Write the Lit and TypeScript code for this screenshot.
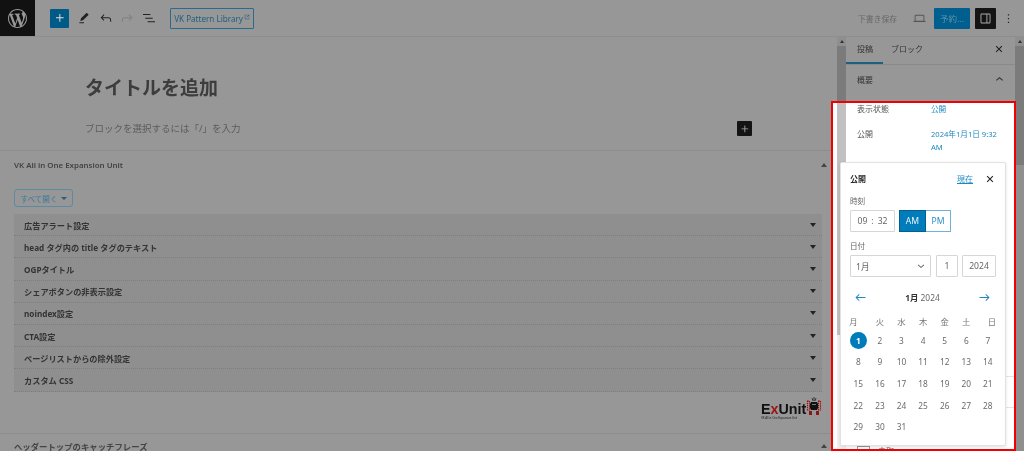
import { LitElement, html, css, svg } from "lit";
import { customElement } from "lit/decorators.js";

const icon = (d: string, size = 16, cls = "") =>
  html`<svg class=${cls} width=${size} height=${size} viewBox="0 0 24 24" fill="currentColor"><path d=${d}></path></svg>`;

const P = {
  plus: "M11 12.5V17.5H12.5V12.5H17.5V11H12.5V6H11V11H6V12.5H11Z",
  brush: "m19 7-3-3-8.5 8.5-1 4 4-1L19 7Zm-7 11.5H5V20h7v-1.5Z",
  undo: "M18.3 11.7c-.6-.6-1.4-.9-2.3-.9H6.7l2.9-3.3-1.1-1-4.5 5L8.5 16l1-1-2.7-2.7H16c.5 0 .9.2 1.3.5 1 1 1 3.4 1 4.5v.3h1.5v-.2c0-1.5 0-4.3-1.5-5.7z",
  redo: "M15.6 6.5l-1.1 1 2.9 3.3H8c-.9 0-1.7.3-2.3.9-1.4 1.5-1.4 4.2-1.4 5.6v.2h1.5v-.3c0-1.1 0-3.5 1-4.5.3-.3.7-.5 1.3-.5h9.2L14.5 15l1.1 1.1 4.6-4.6-4.6-5z",
  list: "M3 6h11v1.5H3V6zm3.5 5.5h11V13h-11v-1.5zM21 17H10v1.5h11V17z",
  closeBold: "M13.8 12l6-6-1.8-1.8-6 6-6-6L4.2 6l6 6-6 6L6 19.8l6-6 6 6 1.8-1.8z",
  up: "M5.5 13L12 7.5l6.5 5.5-1.2 1.4L12 10l-5.3 4.4L5.5 13z",
  down: "M18.5 10.5L12 16l-6.5-5.5 1.2-1.4L12 13.5l5.3-4.4 1.2 1.4z",
  left: "M20 11.2H6.8l3.7-3.7-1-1L3.9 12l5.6 5.5 1-1-3.7-3.7H20z",
  right: "m14.5 6.5-1 1 3.7 3.7H4v1.6h13.2l-3.7 3.7 1 1 5.6-5.5z",
  laptop: "M20.5 16h-.7V8c0-1.1-.9-2-2-2H6.2c-1.1 0-2 .9-2 2v8h-.7c-.8 0-1.5.7-1.5 1.5h20c0-.8-.7-1.5-1.5-1.5zM5.7 8c0-.3.2-.5.5-.5h11.6c.3 0 .5.2.5.5v7.6H5.7V8z",
  side: "M18 4H6c-1.1 0-2 .9-2 2v12c0 1.1.9 2 2 2h12c1.1 0 2-.9 2-2V6c0-1.1-.9-2-2-2zM5.5 18V6c0-.3.2-.5.5-.5h7.5v13H6c-.3 0-.5-.2-.5-.5zm13 0c0 .3-.2.5-.5.5h-3v-13h3c.3 0 .5.2.5.5v12z",
  dots: "M13 19h-2v-2h2v2zm0-6h-2v-2h2v2zm0-6h-2V5h2v2z",
  ext: "M19 14v5H5V5h5V3H3v18h18v-7zM13 3v2h4.6l-7.3 7.3 1.4 1.4L19 6.4V11h2V3z",
  wp: "M20 10c0-5.51-4.49-10-10-10C4.48 0 0 4.49 0 10c0 5.52 4.48 10 10 10 5.51 0 10-4.48 10-10zM7.78 15.37L4.37 6.22c.55-.02 1.17-.08 1.17-.08.5-.06.44-1.13-.06-1.11 0 0-1.45.11-2.37.11-.18 0-.37 0-.58-.01C4.12 2.69 6.87 1.11 10 1.11c2.33 0 4.45.87 6.05 2.34-.68-.11-1.65.39-1.65 1.58 0 .74.45 1.36.9 2.1.35.61.55 1.36.55 2.46 0 1.49-1.4 5-1.4 5l-3.03-8.37c.54-.02.82-.17.82-.17.5-.05.44-1.25-.06-1.22 0 0-1.44.12-2.38.12-.87 0-2.33-.12-2.33-.12-.5-.03-.56 1.2-.06 1.22l.92.08 1.26 3.41zM17.41 10c.24-.64.74-1.87.43-4.25.7 1.29 1.05 2.71 1.05 4.25 0 3.29-1.73 6.24-4.4 7.78.97-2.59 1.94-5.2 2.92-7.78zM6.1 18.09C3.12 16.65 1.11 13.53 1.11 10c0-1.3.23-2.48.72-3.59C3.25 10.3 4.67 14.2 6.1 18.09zm4.03-6.63l2.58 6.98c-.86.29-1.76.45-2.71.45-.79 0-1.57-.11-2.29-.33.81-2.38 1.62-4.74 2.42-7.1z",
};

const ROWS = [
  "広告アラート設定",
  "head タグ内の title タグのテキスト",
  "OGPタイトル",
  "シェアボタンの非表示設定",
  "noindex設定",
  "CTA設定",
  "ページリストからの除外設定",
  "カスタム CSS",
];
const WEEK = ["月", "火", "水", "木", "金", "土", "日"];
const DAYS = Array.from({ length: 31 }, (_, i) => i + 1);

@customElement("app-root")
export class AppRoot extends LitElement {
  static styles = css`
    :host {
      display: block;
      position: relative;
      width: 1024px;
      height: 451px;
      overflow: hidden;
      background: #979797;
      color: #2e2e2e;
      font-family: "Noto Sans", "Noto Sans CJK JP", sans-serif;
      font-size: 9px;
      filter: blur(0.35px);
    }
    svg { display: block; flex: none; }
    .top {
      height: 36px;
      display: flex;
      align-items: center;
      border-bottom: 1px solid #8e8e8e;
    }
    .wp {
      width: 35px;
      height: 36px;
      background: #111;
      color: #979797;
      display: flex;
      align-items: center;
      justify-content: center;
    }
    .add {
      width: 19px;
      height: 19px;
      margin-left: 15px;
      background: #005a87;
      color: #ddd;
      border-radius: 1px;
      display: flex;
      align-items: center;
      justify-content: center;
    }
    .tools { display: flex; gap: 5.7px; margin-left: 7px; color: #222; }
    .tools .off { color: #808080; }
    .vk {
      width: 84px;
      height: 21px;
      box-sizing: border-box;
      margin-left: 13px;
      border: 1px solid #2a6a8c;
      border-radius: 1px;
      color: #1f5f80;
      font-size: 8.1px;
      display: flex;
      align-items: center;
      justify-content: center;
      gap: 1px;
    }
    .vk svg { margin-top: -2px; }
    .sp { flex: 1; }
    .draft { color: #666; font-size: 7.8px; }
    .lap { margin-left: 15px; color: #555; }
    .pub {
      width: 36px;
      height: 21px;
      margin-left: 7px;
      background: #005f8e;
      color: #5d93ad;
      font-size: 8.5px;
      border-radius: 1px;
      display: flex;
      align-items: center;
      justify-content: center;
    }
    .toggle {
      width: 21px;
      height: 21px;
      margin-left: 5px;
      background: #141414;
      color: #aaa;
      border-radius: 1px;
      display: flex;
      align-items: center;
      justify-content: center;
    }
    .more { margin: 0 8px 0 5px; color: #222; }

    .body { display: flex; height: 414px; }
    .main { width: 837px; flex: none; box-sizing: border-box; }
    .editor {
      height: 114px;
      box-sizing: border-box;
      padding: 38px 85px 0;
      border-bottom: 1px solid #8d8d8d;
    }
    .title { font-size: 19px; line-height: 26px; font-weight: 700; color: #3d3d3d; }
    .ph {
      display: flex;
      align-items: center;
      justify-content: space-between;
      margin: 20px 0 0;
      font-size: 9.5px;
      line-height: 16px;
      color: #5c5c5c;
    }
    .ph .plus {
      width: 15px;
      height: 15px;
      margin-top: -1px;
      background: #141414;
      color: #aaa;
      border-radius: 1px;
      display: flex;
      align-items: center;
      justify-content: center;
    }
    .head {
      display: flex;
      align-items: center;
      justify-content: space-between;
      height: 26px;
      box-sizing: border-box;
      padding: 2px 10px 0 14px;
      font-weight: 600;
      font-size: 7.9px;
      color: #444;
    }
    .head.cjk { font-size: 8.4px; padding-top: 0; margin-top: -1px; }
    .tri {
      width: 0;
      height: 0;
      border-left: 3.5px solid transparent;
      border-right: 3.5px solid transparent;
      border-bottom: 4px solid #444;
    }
    .meta { padding: 12px 15px 0 14px; }
    .open {
      width: 59px;
      height: 18px;
      box-sizing: border-box;
      border: 1px solid #5d8aa3;
      border-radius: 3px;
      color: #3a7a9c;
      font-size: 7.6px;
      display: flex;
      align-items: center;
      justify-content: center;
      gap: 3px;
    }
    .open b {
      border-left: 3px solid transparent;
      border-right: 3px solid transparent;
      border-top: 3.5px solid #1f5f80;
    }
    .items { margin-top: 7px; background: #8f8f8f; }
    .item {
      height: 22.2px;
      box-sizing: border-box;
      padding: 0 6px 0 10px;
      display: flex;
      align-items: center;
      justify-content: space-between;
      font-weight: 700;
      font-size: 8.2px;
      color: #333;
      border-bottom: 1px dotted #7f7f7f;
    }
    .item b {
      border-left: 3.5px solid transparent;
      border-right: 3.5px solid transparent;
      border-top: 4px solid #222;
    }
    .brand {
      height: 41px;
      box-sizing: border-box;
      padding-top: 5px;
      display: flex;
      justify-content: flex-end;
      gap: 3px;
    }
    .ex { width: 42px; color: #111; font: 900 14.3px/16px "Liberation Sans", sans-serif; margin-top: 4px; }
    .ex em { color: #9c1111; font-style: normal; }
    .ex small { display: block; font-size: 2.8px; line-height: 3px; color: #222; white-space: nowrap; font-weight: 400; }
    .sec { border-top: 1px solid #8d8d8d; }
    .sb { width: 9px; flex: none; background: #8f8f8f; display: flex; flex-direction: column; }
    .sb .arr { height: 9px; display: flex; align-items: center; justify-content: center; }
    .sb .arr .tri { border-bottom-color: #333; border-left-width: 2.5px; border-right-width: 2.5px; border-bottom-width: 3px; }
    .sb .th { background: #7b7b7b; }
    .side { flex: 1; }
    .tabs {
      height: 27px;
      display: flex;
      border-bottom: 1px solid #8a8a8a;
      align-items: stretch;
      font-size: 8px;
      color: #333;
    }
    .tab { padding: 0 0 2px 8px; display: flex; align-items: center; border-bottom: 2px solid transparent; height: 27px; box-sizing: border-box; }
    .tab.on { border-bottom-color: #1f5f80; padding: 0 10px 2px 11px; }
    .tabs .x { margin: 7px 11px 0 auto; color: #222; }
    .sum {
      height: 28px;
      display: flex;
      align-items: center;
      justify-content: space-between;
      padding: 0 9px 0 11px;
      color: #333;
      font-size: 8px;
    }

    .hl {
      position: absolute;
      left: 831px;
      top: 101px;
      width: 185px;
      height: 350px;
      box-sizing: border-box;
      border: 2px solid #f00000;
      background: #fff;
      display: flex;
      overflow: hidden;
    }
    .hl .gut { width: 4px; flex: none; }
    .hl .track { width: 9px; flex: none; background: #f1f1f1; }
    .hl .thumb { height: 232px; background: #c1c1c1; }
    .hl .panel { flex: 1; padding: 0 0 0 11px; color: #555; font-size: 8px; }
    .row { display: flex; }
    .row span:first-child { width: 74px; flex: none; }
    .row a { color: #1e88c0; font-size: 7.6px; }
    .r1 { line-height: 12.5px; margin-top: -0.5px; }
    .r2 { line-height: 12.5px; margin-top: 13px; }
    .ln { height: 1px; background: #e4e4e4; margin-left: -11px; }
    .ln1 { margin-top: 223px; }
    .ln2 { margin-top: 30px; }
    .chk { display: flex; gap: 8px; align-items: flex-start; margin-top: 38px; font-size: 8px; line-height: 10px; }
    .chk i { width: 13px; height: 10px; border: 1px solid #999; box-sizing: border-box; }

    .pop {
      position: absolute;
      left: 7px;
      top: 59px;
      width: 166px;
      height: 284px;
      box-sizing: border-box;
      padding: 8px 10px 0 9px;
      background: #fff;
      border: 1px solid #e2e2e2;
      border-radius: 2px;
      box-shadow: 0 1px 3px rgba(0, 0, 0, 0.12);
      color: #555;
      font-size: 8.5px;
    }
    .ph2 { display: flex; align-items: center; height: 15px; }
    .ph2 strong { font-weight: 700; color: #2a2a2a; font-size: 8px; }
    .ph2 a { margin-left: auto; color: #1e88c0; text-decoration: underline; font-size: 8px; }
    .ph2 svg { margin-left: 12px; color: #222; }
    .lab { font-size: 7.6px; color: #666; line-height: 10px; }
    .lab.t { margin-top: 10px; }
    .lab.d { margin-top: 9px; }
    .timer { display: flex; margin-top: 4px; }
    .field {
      height: 22px;
      box-sizing: border-box;
      border: 1px solid #d6d6d6;
      border-radius: 1px;
      display: flex;
      align-items: center;
      justify-content: center;
      font-size: 8.6px;
      color: #666;
    }
    .time { width: 45px; gap: 4px; }
    .ampm { display: flex; margin-left: 4px; }
    .am, .pm {
      height: 22px;
      box-sizing: border-box;
      display: flex;
      align-items: center;
      justify-content: center;
      font-size: 8.6px;
    }
    .am { width: 27px; background: #007cba; color: #eaf5fb; border: 1px solid #005f8e; }
    .pm { width: 25px; border: 1px solid #6db3d8; border-left: none; color: #2b8fc2; }
    .dates { display: flex; gap: 5px; margin-top: 4px; }
    .dates .mon { width: 81px; flex: none; justify-content: space-between; padding: 0 3px 0 5px; }
    .dates .dd { width: 22px; flex: none; }
    .dates .yy { width: 34px; flex: none; margin-left: -1px; }
    .nav { display: flex; align-items: center; justify-content: space-between; margin-top: 12px; height: 16px; padding: 0 3px; color: #1e88c0; }
    .nav div { color: #666; font-size: 8.4px; }
    .nav div b { color: #333; }
    .cal {
      display: grid;
      grid-template-columns: repeat(7, 21.6px);
      grid-template-rows: 16.3px;
      grid-auto-rows: 21.7px;
      margin: 8px 0 0 -2.5px;
      justify-items: center;
      align-items: center;
      font-size: 8.3px;
      color: #6a6a6a;
    }
    .cal .wk { color: #777; }
    .cal .wk.first { padding-right: 10px; }
    .cal .wk.last { padding-left: 8px; }
    .cal .sel {
      width: 17px;
      height: 17px;
      border-radius: 50%;
      background: #007cba;
      color: #fff;
      display: flex;
      align-items: center;
      justify-content: center;
      font-weight: 700;
    }
  `;

  private robot() {
    return html`<svg width="16" height="19" viewBox="0 0 16 19">
      ${svg`<path d="M8 0v4M6 1l1 3M10 1L9 4" stroke="#222" stroke-width=".8" fill="none"/>
      <path d="M5 5h6l1 2v4l-1 2H5l-1-2V7z" fill="#111"/>
      <path d="M1.5 4h2v9h-2zM12.5 4h2v9h-2z" fill="none" stroke="#9c1111" stroke-width="1.1" stroke-dasharray="1.4 .7"/>
      <path d="M3 14h3v4H3zM10 14h3v4h-3z" fill="#8f1414"/>
      <path d="M6.5 7h1v1h-1zM8.5 7h1v1h-1z" fill="#ddd"/>`}
    </svg>`;
  }

  render() {
    return html`
      <div class="top">
        <div class="wp"><svg width="19" height="19" viewBox="0 0 20 20" fill="currentColor"><path d=${P.wp}></path></svg></div>
        <div class="add">${icon(P.plus, 16)}</div>
        <div class="tools">
          ${icon(P.brush)}${icon(P.undo)}<span class="off">${icon(P.redo)}</span>${icon(P.list)}
        </div>
        <div class="vk">VK Pattern Library${icon(P.ext, 6)}</div>
        <div class="sp"></div>
        <span class="draft">下書き保存</span>
        <span class="lap">${icon(P.laptop, 15)}</span>
        <div class="pub">予約...</div>
        <div class="toggle">${icon(P.side, 15)}</div>
        <span class="more">${icon(P.dots, 15)}</span>
      </div>
      <div class="body">
        <div class="main">
          <div class="editor">
            <div class="title">タイトルを追加</div>
            <div class="ph">
              <span>ブロックを選択するには「/」を入力</span>
              <span class="plus">${icon(P.plus, 14)}</span>
            </div>
          </div>
          <div class="head"><span>VK All in One Expansion Unit</span><span class="tri"></span></div>
          <div class="meta">
            <div class="open">すべて開く<b></b></div>
            <div class="items">
              ${ROWS.map((r) => html`<div class="item"><span>${r}</span><b></b></div>`)}
            </div>
            <div class="brand">
              <div class="ex">E<em>x</em>Unit<small>VK All in One Expansion Unit</small></div>
              ${this.robot()}
            </div>
          </div>
          <div class="sec"><div class="head cjk"><span>ヘッダートップのキャッチフレーズ</span><span class="tri"></span></div></div>
        </div>
        <div class="sb"><div class="arr"><span class="tri"></span></div><div class="th" style="height:368px"></div></div>
        <div class="side">
          <div class="tabs">
            <div class="tab on">投稿</div>
            <div class="tab">ブロック</div>
            <span class="x">${icon(P.closeBold, 10)}</span>
          </div>
          <div class="sum"><span>概要</span>${icon(P.up, 13)}</div>
        </div>
        <div class="sb"><div class="arr"><span class="tri"></span></div><div class="th" style="height:119px"></div></div>
      </div>

      <div class="hl">
        <div class="gut"></div>
        <div class="track"><div class="thumb"></div></div>
        <div class="panel">
          <div class="row r1"><span>表示状態</span><a>公開</a></div>
          <div class="row r2"><span>公開</span><a>2024年1月1日 9:32<br />AM</a></div>
          <div class="ln ln1"></div>
          <div class="ln ln2"></div>
          <div class="chk"><i></i>未取</div>
        </div>
        <div class="pop">
          <div class="ph2"><strong>公開</strong><a>現在</a>${icon(P.closeBold, 10)}</div>
          <div class="lab t">時刻</div>
          <div class="timer">
            <div class="field time"><span>09</span><span>:</span><span>32</span></div>
            <div class="ampm"><div class="am">AM</div><div class="pm">PM</div></div>
          </div>
          <div class="lab d">日付</div>
          <div class="dates">
            <div class="field mon"><span>1月</span>${icon(P.down, 12)}</div>
            <div class="field dd">1</div>
            <div class="field yy">2024</div>
          </div>
          <div class="nav">${icon(P.left, 15)}<div><b>1月</b> 2024</div>${icon(P.right, 15)}</div>
          <div class="cal">
            ${WEEK.map((w, i) => html`<span class="wk ${i === 0 ? "first" : i === 6 ? "last" : ""}">${w}</span>`)}
            ${DAYS.map((d) => html`<span class=${d === 1 ? "sel" : ""}>${d}</span>`)}
          </div>
        </div>
      </div>
    `;
  }
}
